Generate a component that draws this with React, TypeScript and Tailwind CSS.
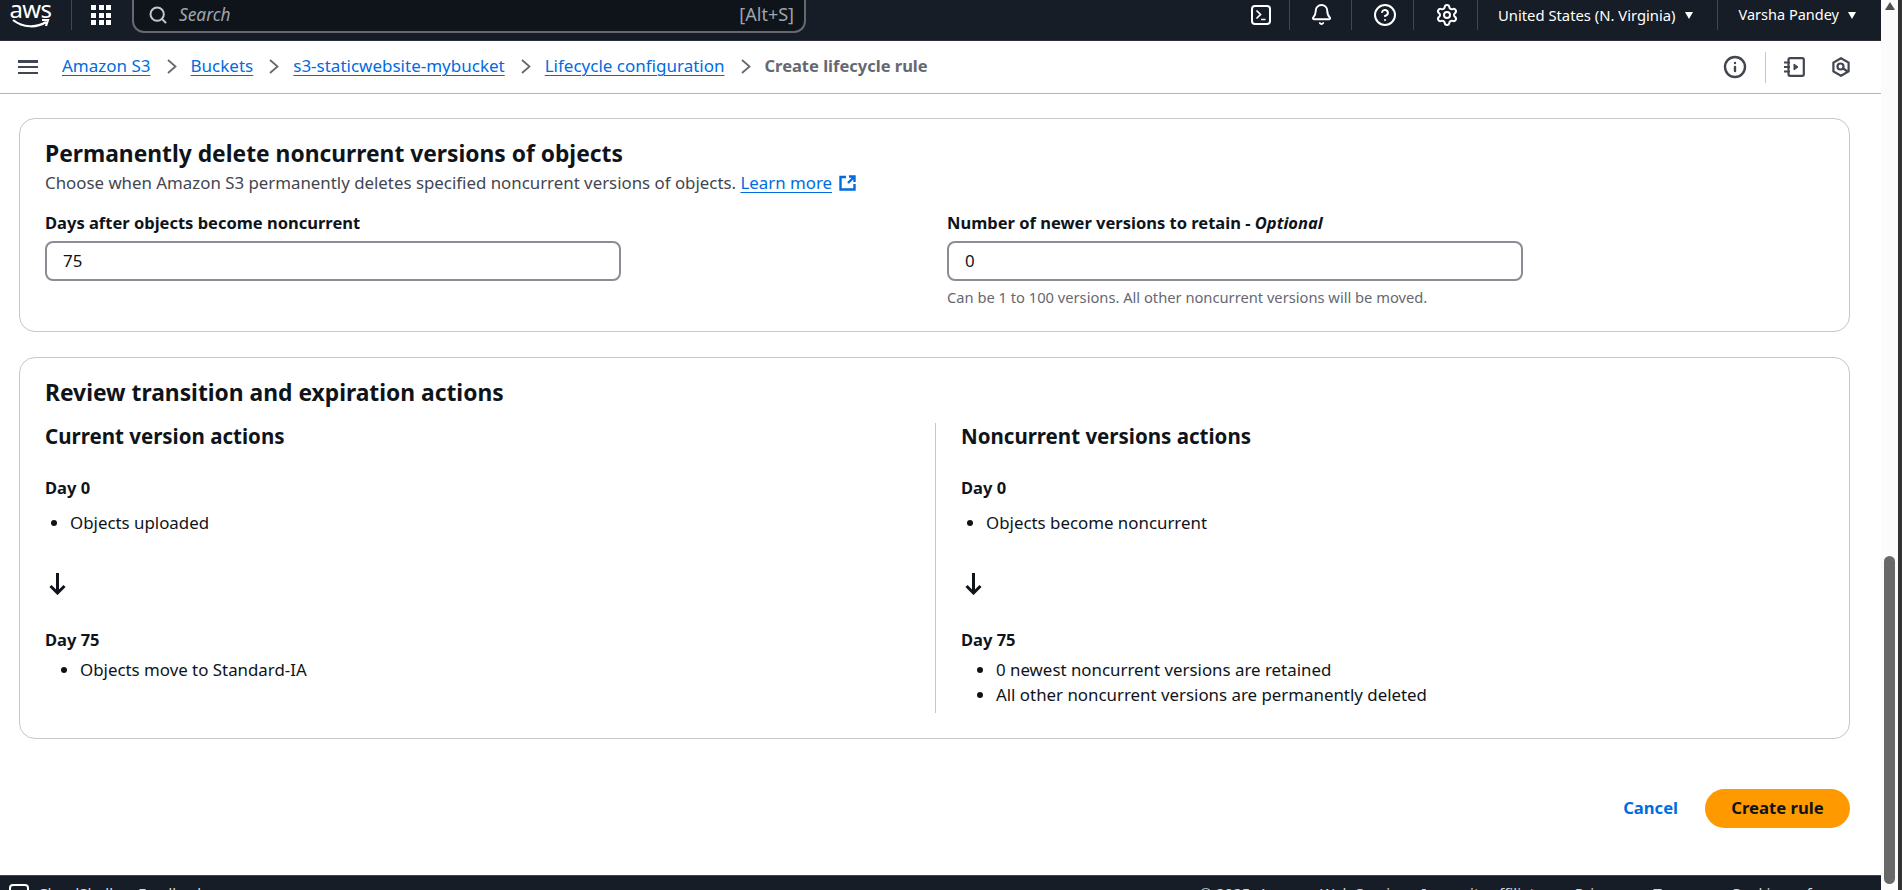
import React from "react";
import { Search, Bell, CircleHelp, Settings, Info } from "lucide-react";

function Crumb({ label }: { label: string }) {
  return (
    <>
      <a className="text-[#006ce0] underline underline-offset-[3px] decoration-1">{label}</a>
      <svg width="10" height="15" viewBox="0 0 10 15" fill="none" stroke="#656871" strokeWidth="1.8" className="ml-[16px] mr-[14px] shrink-0">
        <path d="M1 1l7.5 6.5L1 14" />
      </svg>
    </>
  );
}

function Bullets({ items, indent }: { items: string[]; indent: string }) {
  return (
    <ul className={`list-disc text-[16.87px] ${indent}`}>
      {items.map((item) => (
        <li key={item} className="h-[25px] leading-[25px]">{item}</li>
      ))}
    </ul>
  );
}

function ActionColumn({ title, first, last, className }: { title: string; first: string; last: string[]; className: string }) {
  return (
    <div className={className}>
      <h3 className="text-[20.5px] leading-[26px] font-bold">{title}</h3>
      <div className="mt-[28px] text-[16.5px] font-bold leading-[22px]">Day 0</div>
      <div className="mt-[11px]"><Bullets items={[first]} indent="pl-[25px]" /></div>
      <svg width="17" height="22" viewBox="0 0 17 22" fill="none" stroke="#0f141a" strokeWidth="3" className="mt-[38px] ml-[4px]">
        <path d="M8.5 0v20M1.5 13l7 7 7-7" />
      </svg>
      <div className="mt-[34px] text-[16.5px] font-bold leading-[22px]">Day 75</div>
      <div className="mt-[6px]"><Bullets items={last} indent="pl-[35px]" /></div>
    </div>
  );
}

export default function App() {
  return (
    <div className="h-[890px] overflow-hidden flex text-[16.85px] text-[#0f141a] bg-white font-['Noto_Sans',sans-serif]">
      <div className="flex-1 min-w-0 flex flex-col">
        {/* top nav, scrolled a little past the window top */}
        <div className="h-[41px] shrink-0 bg-[#161d26] flex items-start text-white border-b border-[#2a2f38]">
          <div className="w-[39px] ml-[11px] flex flex-col items-center leading-none">
            <span className="text-[24px] leading-[18px] tracking-tight">aws</span>
            <svg width="38" height="10" viewBox="0 0 38 10" fill="none" stroke="white" strokeWidth="2.2" className="mt-[1px]"><path d="M1 1c10 8 24 8 33 2M30 1l6 0-2 6" /></svg>
          </div>
          <div className="w-px h-[30px] bg-[#424650] ml-[21px]" />
          <div className="ml-[19px] mt-[5px] grid grid-cols-3 gap-[2.5px]">
            {Array.from({ length: 9 }).map((_, i) => <span key={i} className="w-[5px] h-[5px] bg-white" />)}
          </div>
          <div className="ml-[21px] w-[674px] h-[33px] border-2 border-t-0 border-[#656871] rounded-b-[12px] flex items-center bg-[#0f141a] pl-[14px] pr-[10px]">
            <Search size={20} strokeWidth={2.4} className="text-[#c6c6cd] -mt-[2px]" />
            <span className="ml-[11px] text-[17.3px] italic text-[#a0a4ac] -mt-[2px]">Search</span>
            <span className="ml-auto text-[18px] text-[#a0a4ac] -mt-[2px]">[Alt+S]</span>
          </div>
          <div className="ml-auto flex items-center h-[30px]">
            <svg width="20" height="20" viewBox="0 0 20 20" fill="none" stroke="white" strokeWidth="2"><rect x="1" y="1" width="18" height="18" rx="3" /><path d="M5.5 5.5l4 4-4 4M10 14.5h4.5" strokeWidth="1.7" /></svg>
            <div className="w-px h-full bg-[#424650] ml-[18px]" />
            <Bell size={23} strokeWidth={2} className="ml-[20px] mr-[18px] -mt-[1px]" />
            <div className="w-px h-full bg-[#424650]" />
            <CircleHelp size={24} strokeWidth={2} className="ml-[21px] mr-[16px]" />
            <div className="w-px h-full bg-[#424650]" />
            <Settings size={24} strokeWidth={2} className="ml-[21px] mr-[18px]" />
            <div className="w-px h-full bg-[#424650]" />
            <span className="ml-[20px] text-[14.8px]">United States (N. Virginia)</span>
            <span className="ml-[9px] w-0 h-0 border-x-4 border-x-transparent border-t-[7px] border-t-white" />
            <div className="w-px h-full bg-[#424650] ml-[24px]" />
            <span className="ml-[21px] text-[14.5px]">Varsha Pandey</span>
            <span className="ml-[9px] mr-[25px] w-0 h-0 border-x-4 border-x-transparent border-t-[7px] border-t-white" />
          </div>
        </div>
        {/* breadcrumbs */}
        <div className="h-[53px] shrink-0 border-b border-[#b4b4bb] flex items-center pl-[18px] pr-[31px]">
          <div className="flex flex-col justify-between h-[14px] w-[20px]">
            <span className="h-[2.5px] bg-[#424650]" /><span className="h-[2.5px] bg-[#424650]" /><span className="h-[2.5px] bg-[#424650]" />
          </div>
          <div className="ml-[24px] -mt-[2px] flex items-center leading-[22px] text-[17px]">
            <Crumb label="Amazon S3" />
            <Crumb label="Buckets" />
            <Crumb label="s3-staticwebsite-mybucket" />
            <Crumb label="Lifecycle configuration" />
            <span className="text-[16.5px] font-bold text-[#656871]">Create lifecycle rule</span>
          </div>
          <div className="ml-auto flex items-center text-[#424650]">
            <Info size={24} strokeWidth={2.4} />
            <div className="w-px h-[31px] bg-[#c6c6cd] ml-[18px] mr-[18px]" />
            <svg width="21" height="20" viewBox="0 0 21 20" fill="none" stroke="currentColor" strokeWidth="2.2"><rect x="4.5" y="1.2" width="15.3" height="17.6" rx="1.5" /><path d="M0 5.5h6M0 10h6M0 14.5h6" /><path d="M10 7l4 3-4 3z" fill="currentColor" strokeWidth="1" /></svg>
            <svg width="18" height="20" viewBox="0 0 18 20" fill="none" stroke="currentColor" strokeWidth="2.2" className="ml-[27px]"><path d="M9 1.2l7.6 4.4v8.8L9 18.8l-7.6-4.4V5.6z" /><circle cx="8.5" cy="9.5" r="3" /><path d="M10.5 11l5 3.5" /></svg>
          </div>
        </div>
        {/* content */}
        <div className="flex-1 min-h-0 pl-[19px] pr-[31px] pt-[24px]">
          <section className="h-[214px] border border-[#c6c6cd] rounded-[16px] pt-[21px] pl-[25px]">
            <h2 className="text-[22.8px] leading-[28px] font-bold">Permanently delete noncurrent versions of objects</h2>
            <p className="text-[#424650] leading-[22px] mt-[4px]">
              Choose when Amazon S3 permanently deletes specified noncurrent versions of objects.{" "}
              <a className="text-[#006ce0] underline underline-offset-[3px]">Learn more</a>
              <svg width="17" height="16" viewBox="0 0 17 16" fill="none" stroke="#006ce0" strokeWidth="2.4" className="inline ml-[7px] -mt-[2px]">
                <path d="M7 2H1.5v12.5h14V9M10 1.5h5.5V7M15.5 1.5L9 8" />
              </svg>
            </p>
            <div className="mt-[18px] grid grid-cols-[902px_1fr]">
              <div>
                <label className="block text-[16.5px] font-bold leading-[22px]">Days after objects become noncurrent</label>
                <div className="mt-[7px] w-[576px] h-[40px] border-2 border-[#8c8c94] rounded-[8px] flex items-center pl-[16px]">75</div>
              </div>
              <div>
                <label className="block text-[16.5px] font-bold leading-[22px]">Number of newer versions to retain - <i>Optional</i></label>
                <div className="mt-[7px] w-[576px] h-[40px] border-2 border-[#8c8c94] rounded-[8px] flex items-center pl-[16px]">0</div>
                <p className="mt-[7px] text-[14.7px] leading-[18px] text-[#656871]">Can be 1 to 100 versions. All other noncurrent versions will be moved.</p>
              </div>
            </div>
          </section>
          <section className="mt-[25px] h-[382px] border border-[#c6c6cd] rounded-[16px] pt-[21px] pl-[25px]">
            <h2 className="text-[22.8px] leading-[28px] font-bold">Review transition and expiration actions</h2>
            <div className="mt-[16px] flex">
              <ActionColumn className="w-[891px] h-[290px] border-r border-[#c6c6cd] mr-[25px]" title="Current version actions" first="Objects uploaded" last={["Objects move to Standard-IA"]} />
              <ActionColumn className="flex-1" title="Noncurrent versions actions" first="Objects become noncurrent" last={["0 newest noncurrent versions are retained", "All other noncurrent versions are permanently deleted"]} />
            </div>
          </section>
          <div className="mt-[50px] flex items-center justify-end">
            <a className="text-[16.6px] font-bold text-[#006ce0]">Cancel</a>
            <button className="ml-[27px] w-[145px] h-[39px] pb-[2px] rounded-full bg-[#ff9900] text-[16.7px] font-bold">Create rule</button>
          </div>
        </div>
        {/* footer, runs past the bottom of the window */}
        <div className="h-[15px] shrink-0 bg-[#161d26] border-t border-[#424650] text-[#d1d5db] text-[15.1px] leading-[20px] flex items-start pl-[9px] overflow-hidden whitespace-nowrap">
          <svg width="20" height="20" viewBox="0 0 20 20" fill="none" stroke="white" strokeWidth="2" className="mt-[8px] shrink-0"><rect x="1" y="1" width="18" height="18" rx="3" /></svg>
          <span className="ml-[9px] mt-[7px]">CloudShell</span>
          <span className="ml-[25px] mt-[7px]">Feedback</span>
          <span className="ml-auto mt-[7px]">© 2025, Amazon Web Services, Inc. or its affiliates.</span>
          <span className="ml-[20px] mt-[7px]">Privacy</span>
          <span className="ml-[28px] mt-[7px]">Terms</span>
          <span className="ml-[34px] mr-[14px] mt-[7px]">Cookie preferences</span>
        </div>
      </div>
      {/* scrollbar */}
      <div className="w-[17px] shrink-0 bg-[#fbfbfb] flex flex-col items-center">
        <span className="mt-[2px] w-0 h-0 border-x-[5px] border-x-transparent border-b-[8px] border-b-[#505050]" />
        <div className="mt-[546px] w-[11px] h-[328px] rounded-full bg-[#686868]" />
      </div>
      <div className="w-[4px] shrink-0 bg-[#333333]" />
    </div>
  );
}
